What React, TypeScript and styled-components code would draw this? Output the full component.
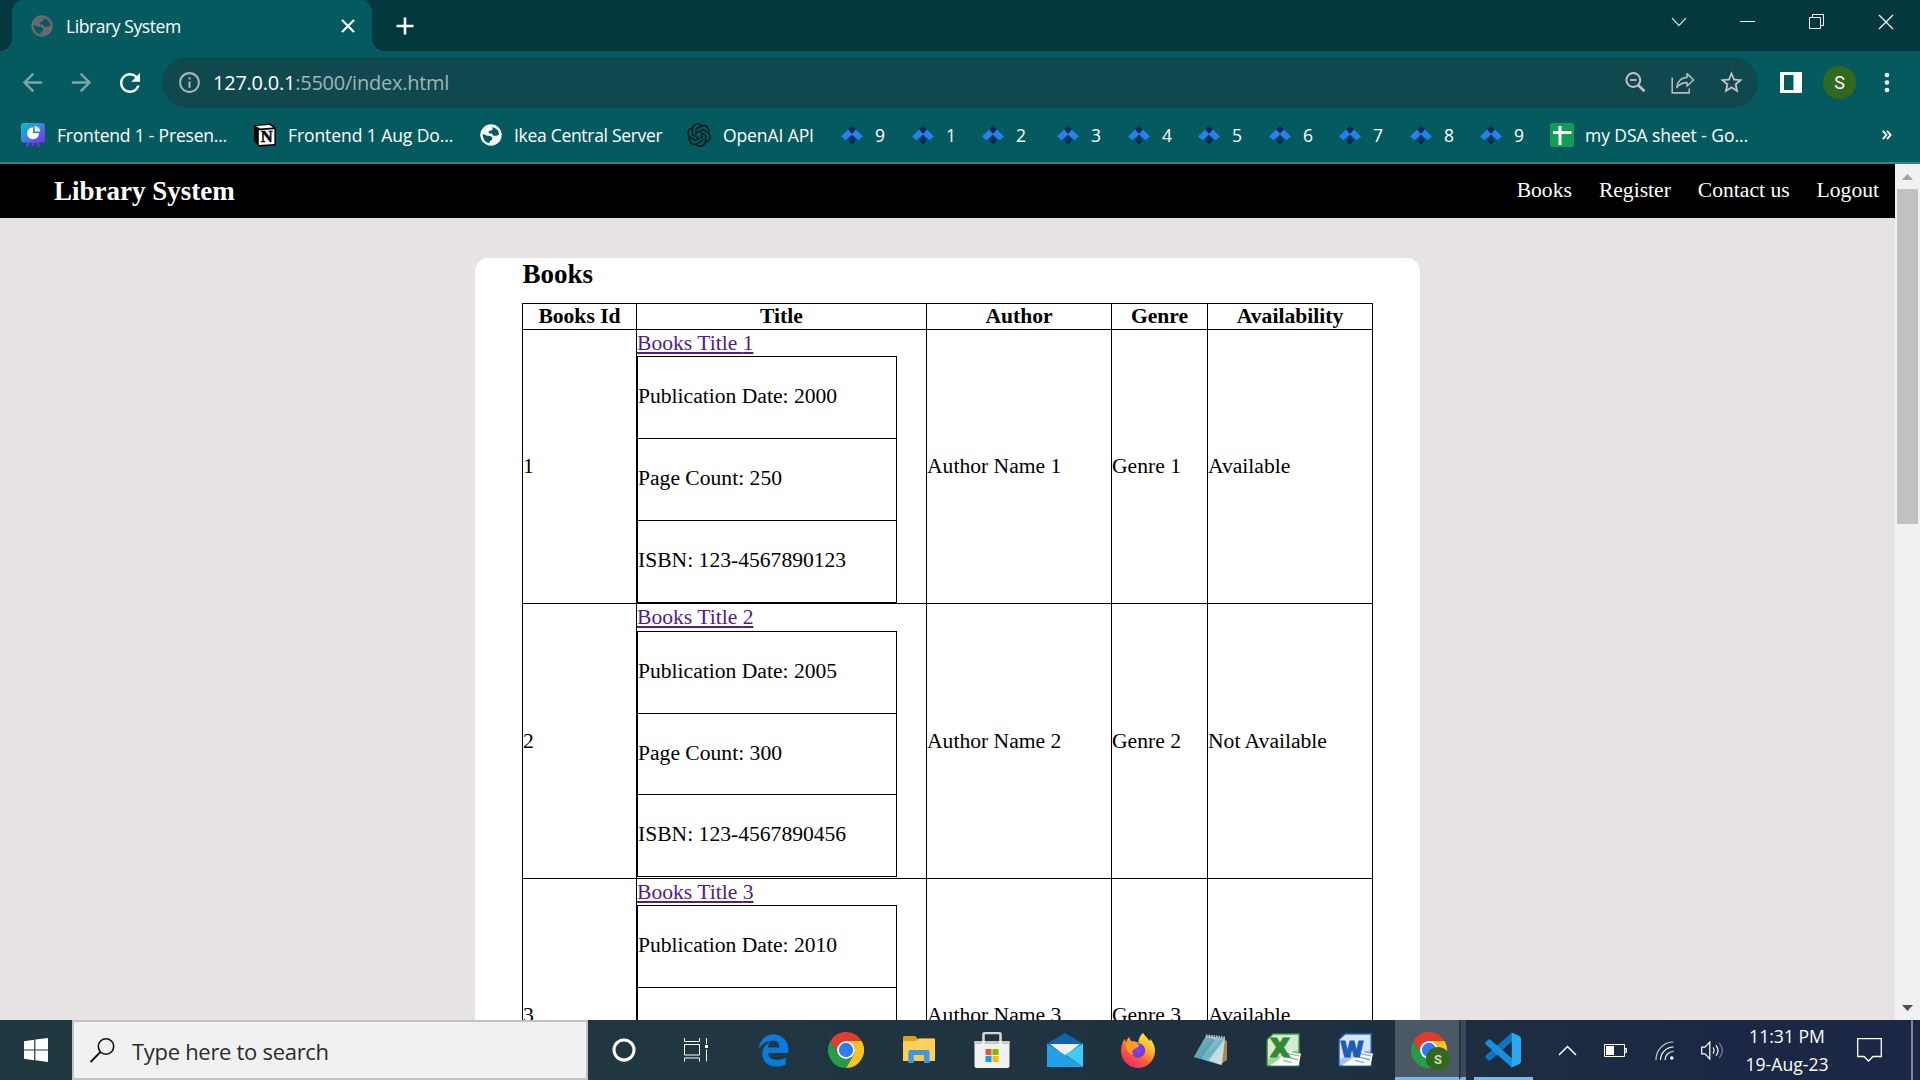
import React from "react";
import styled, { createGlobalStyle } from "styled-components";
import {
  MdArrowBack,
  MdArrowForward,
  MdRefresh,
  MdInfoOutline,
  MdStarOutline,
} from "react-icons/md";
import { SiOpenai } from "react-icons/si";
import { FaEdgeLegacy } from "react-icons/fa";

const ui = `"Open Sans", "Noto Sans", sans-serif`;
const serif = `"Liberation Serif", "Times New Roman", serif`;

const GlobalStyle = createGlobalStyle`
  * { box-sizing: border-box; }
  body { margin: 0; overflow: hidden; background: #e8e3e3; }
  svg { display: block; flex: none; }
`;

const Desktop = styled.div`
  width: 1920px;
  height: 1080px;
  display: flex;
  flex-direction: column;
  overflow: hidden;
`;

/* Fixed-width cell of a bar with centred content. */
const Slot = styled.div<{ $w: number }>`
  flex: none;
  width: ${(p) => p.$w}px;
  height: 100%;
  display: flex;
  align-items: center;
  justify-content: center;
`;
const Spacer = styled.div`
  flex: 1;
`;

/* ---------- Browser chrome ---------- */

const TabStrip = styled.div`
  flex: none;
  height: 51px;
  background: #03393e;
  display: flex;
`;
const TabCurve = styled.div<{ $side: "left" | "right" }>`
  width: 12px;
  height: 51px;
  background: radial-gradient(
    circle at ${(p) => (p.$side === "left" ? "0" : "12px")} 39px,
    transparent 11.5px,
    #055a60 12.2px
  );
  clip-path: inset(39px 0 0 0);
`;
const Tab = styled.div`
  width: 360px;
  height: 51px;
  background: #055a60;
  border-radius: 12px 12px 0 0;
  display: flex;
  align-items: center;
  padding: 0 17px 0 19px;
  color: #fff;
`;
const TabTitle = styled.span`
  flex: 1;
  padding-left: 13px;
  font: 17.5px/24px ${ui};
  letter-spacing: -0.42px;
`;
const WindowButtons = styled.div`
  display: flex;
  height: 43px;
`;

const Toolbar = styled.div`
  flex: none;
  height: 63px;
  padding-top: 6px;
  background: #055a60;
  display: flex;
  align-items: flex-start;
`;
const ToolGroup = styled.div<{ $w: number; $pad?: number }>`
  width: ${(p) => p.$w}px;
  padding-left: ${(p) => p.$pad ?? 0}px;
  height: 51px;
  display: flex;
`;
const AddressBar = styled.div`
  width: 1596px;
  height: 51px;
  border-radius: 26px;
  background: #0f484e;
  display: flex;
  align-items: center;
  padding-left: 15px;
  padding-right: 3px;
`;
const Url = styled.span`
  flex: 1;
  padding-left: 11px;
  font: 20px/28px ${ui};
  letter-spacing: -0.24px;
  color: #9fb6b8;
  b {
    font-weight: 400;
    color: #fff;
  }
`;
const Avatar = styled.div`
  width: 33px;
  height: 33px;
  border-radius: 50%;
  background: #33691e;
  color: #fff;
  font: 18px/33px Roboto, sans-serif;
  text-align: center;
`;

const BookmarksBar = styled.div`
  flex: none;
  height: 50px;
  background: #055a60;
  border-bottom: 2px solid #3b8085;
  display: flex;
  align-items: flex-start;
  padding-left: 21px;
`;
const Bookmark = styled.div<{ $w: number; $gap?: number; $ls?: number }>`
  width: ${(p) => p.$w}px;
  height: 42px;
  display: flex;
  align-items: center;
  gap: ${(p) => p.$gap ?? 12}px;
  color: #fff;
  font: 17.5px/24px ${ui};
  letter-spacing: ${(p) => p.$ls ?? 0}px;
  white-space: nowrap;
`;

/* ---------- Web page ---------- */

const Viewport = styled.div`
  flex: none;
  height: 856px;
  display: flex;
  overflow: hidden;
`;
const Page = styled.div`
  width: 1895px;
  height: 856px;
  overflow: hidden;
  background: #e8e3e3;
  font-family: ${serif};
  font-size: 21.6px;
  color: #000;
`;
const SiteHeader = styled.header`
  height: 54px;
  background: #000;
  color: #fff;
  display: flex;
  justify-content: space-between;
  padding: 0 16px 0 54px;
`;
const Brand = styled.div`
  font-size: 27px;
  font-weight: 700;
  line-height: 54px;
`;
const Nav = styled.nav`
  display: flex;
  gap: 27px;
  line-height: 53px;
`;
const Card = styled.main`
  width: 945px;
  margin: 40px 0 0 475px;
  height: 900px;
  padding: 0 47px;
  border-radius: 13.5px;
  background: #fff;
`;
const Heading = styled.h2`
  margin: 0;
  height: 45px;
  padding-left: 0.5px;
  font-size: 27px;
  line-height: 33px;
`;
const Table = styled.div`
  width: 851px;
  border-right: 1px solid #000;
`;
const HeadRow = styled.div`
  display: grid;
  grid-template-columns: 114px 290px 185px 96px 165px;
  height: 25.8px;
  border-top: 1px solid #000;
`;
const Row = styled(HeadRow)`
  height: 274.6px;
`;
const HeadCell = styled.div`
  border-left: 1px solid #000;
  font-weight: 700;
  text-align: center;
  line-height: 24px;
`;
const Cell = styled.div`
  border-left: 1px solid #000;
  display: flex;
  align-items: center;
  line-height: 25px;
`;
const TitleCell = styled.div`
  border-left: 1px solid #000;
`;
const BookLink = styled.a`
  display: block;
  height: 26.5px;
  line-height: 26.6px;
  color: #551a8b;
  text-decoration: underline;
  text-decoration-thickness: 2px;
  text-underline-offset: 2px;
`;
const Details = styled.div`
  width: 260px;
  border: solid #000;
  border-width: 0 1px 1px;
`;
const Detail = styled.div`
  height: 81.8px;
  border-top: 1px solid #000;
  line-height: 79.4px;
`;

const Scrollbar = styled.div`
  width: 25px;
  background: #f1f1f1;
  display: flex;
  flex-direction: column;
  align-items: center;
  justify-content: space-between;
`;
const ScrollEnd = styled.div`
  height: 25px;
  display: flex;
  align-items: center;
  padding-top: 1px;
`;
const Thumb = styled.div`
  width: 21px;
  height: 335px;
  background: #c1c1c1;
`;

/* ---------- Taskbar ---------- */

const Taskbar = styled.div`
  flex: none;
  height: 60px;
  display: flex;
  background: linear-gradient(90deg, #203840 0, #203640 40%, #1e2e40 76%, #1b2744 90%, #1b2744 100%);
`;
const SearchBox = styled.div`
  width: 516px;
  height: 60px;
  background: #f1f1f1;
  border: 2px solid #c2c2c2;
  display: flex;
  align-items: center;
  padding-left: 16px;
  gap: 17px;
  font: 22px/30px ${ui};
  letter-spacing: -0.3px;
  color: #2b2b2b;
  span {
    padding-top: 1px;
  }
`;
const ActiveApp = styled.div`
  width: 64px;
  height: 60px;
  background: #4b5966;
  border-bottom: 3px solid #76b9ed;
  display: flex;
  justify-content: center;
  padding: 12px 0 0 7px;
`;
const ActiveEdge = styled.div`
  width: 7px;
  height: 60px;
  background: #3e4a5a;
  border-left: 2px solid #28343f;
  border-bottom: 3px solid #76b9ed;
`;
const RunningApp = styled.div`
  width: 59px;
  height: 60px;
  margin-left: 8px;
  border-bottom: 3px solid #76b9ed;
  display: flex;
  justify-content: center;
  padding: 12px 1px 0 0;
`;
const Clock = styled.div`
  width: 100px;
  text-align: center;
  color: #fff;
  font: 17.6px/28px ${ui};
  padding-top: 2px;
`;
const ShowDesktop = styled.div`
  width: 9px;
  border-left: 2px solid #808994;
`;

/* ---------- Drawings ---------- */

const Globe = ({ color }: { color: string }) => (
  <svg width="22" height="22" viewBox="0 0 22 22">
    <circle cx="11" cy="11" r="10.700" fill={color} />
    <path
      d="M12.500 3.200C16.500 3.800 19 7 19.200 10.500l-2.400 1.300h-3.600l-1.200-2.200H9.200L8.400 7.800l2-1.200 2.100-.6z"
      fill="#055a60"
    />
    <path
      d="M2.800 9.800l3.600 1.800 3.800.4 2.200 1.600-.4 2.200-2 1.200-.6 2.200C5.200 18.600 2.400 14.800 2.800 9.800z"
      fill="#055a60"
    />
  </svg>
);

const Presentation = () => (
  <svg width="24" height="24" viewBox="0 0 24 24">
    <defs>
      <linearGradient id="pres" x1="0" y1="0" x2="1" y2="1">
        <stop offset="0" stopColor="#00c4cc" />
        <stop offset="0.5" stopColor="#3f7fe0" />
        <stop offset="1" stopColor="#7d2ae8" />
      </linearGradient>
    </defs>
    <path d="M8 18l-2 6M16 18l2 6M12 18v5" stroke="#7d2ae8" strokeWidth="2.6" />
    <path d="M3 0h18a3 3 0 0 1 3 3v13.500a3 3 0 0 1-3 3H3a3 3 0 0 1-3-3V3a3 3 0 0 1 3-3z" fill="url(#pres)" />
    <path d="M12 4.200a6 6 0 1 0 6 6h-6z" fill="#fff" />
    <path d="M13.600 2.800v5.600h5.600a5.600 5.600 0 0 0-5.600-5.600z" fill="#dff3ff" />
  </svg>
);

const Notion = () => (
  <svg width="24" height="24" viewBox="0 0 24 24">
    <path d="M1 2.200 17 .600l6 4.200v17.700L6 23.800 1 17.500z" fill="#000" />
    <path d="M3 2.900 16.400 1.900l3.800 2.700L7 5.500z" fill="#fff" />
    <path d="M5.800 7.200 21.400 6.200v14.800L5.800 22z" fill="#fff" />
    <text x="13.700" y="19.400" textAnchor="middle" fontFamily={serif} fontWeight="700" fontSize="16.500" fill="#000" stroke="#000" strokeWidth="0.500">N</text>
  </svg>
);

const Diamonds = () => (
  <svg width="22" height="20" viewBox="0 0 22 20">
    <path d="M11 0l4 4.800-4 4.800-4-4.800zM11 10.600l4 4.600L11 20l-4-4.800z" fill="#06285c" />
    <path d="M7.200 4.600l4 4.700L4.400 15.200 0 11.400zM14.800 4.600l-4 4.700 6.800 5.900 4.400-3.800z" fill="#2680f2" />
  </svg>
);

const Sheet = () => (
  <svg width="24" height="24" viewBox="0 0 24 24">
    <rect width="24" height="24" rx="2" fill="#0f9d58" />
    <path d="M10 3v19M3 9.500h18.500" stroke="#fff" strokeWidth="3" />
  </svg>
);

const ZoomOut = () => (
  <svg width="21" height="21" viewBox="0 0 21 21" fill="none" stroke="#bfc3c4">
    <circle cx="8.300" cy="8" r="6.900" strokeWidth="2" />
    <path d="M5 8h6.600" strokeWidth="1.800" />
    <path d="M13 13l6.500 6.300" strokeWidth="2.600" />
  </svg>
);
const Share = () => (
  <svg width="24" height="22" viewBox="0 0 24 22" fill="none" stroke="#b4babb" strokeWidth="1.600">
    <path d="M1.200 5.500v15.400h17v-4.400" />
    <path d="M5.800 15.500C6.600 9 10.600 5.600 16 5.400V1.600L22.600 8 16 14.200v-3.600c-4.600 0-7.600 1.400-10.200 4.900z" strokeLinejoin="round" />
  </svg>
);
const SidePanel = () => (
  <svg width="22" height="21" viewBox="0 0 22 21">
    <path d="M0 0h22v21H0zM4 3v15h9.500V3z" fill="#fff" fillRule="evenodd" />
  </svg>
);
const Dots = () => (
  <svg width="6" height="21" viewBox="0 0 6 21" fill="#fff">
    <circle cx="3" cy="3" r="2.300" />
    <circle cx="3" cy="10.500" r="2.300" />
    <circle cx="3" cy="18" r="2.300" />
  </svg>
);
const Cross = ({ size, stroke }: { size: number; stroke: number }) => (
  <svg width={size} height={size} viewBox={`0 0 ${size} ${size}`}>
    <path d={`M1 1L${size - 1} ${size - 1}M${size - 1} 1L1 ${size - 1}`} stroke="#fff" strokeWidth={stroke} />
  </svg>
);
const Plus = () => (
  <svg width="18" height="18" viewBox="0 0 18 18">
    <path d="M9 0.500v17M0.500 9h17" stroke="#fff" strokeWidth="2.600" />
  </svg>
);
const TabsChevron = () => (
  <svg width="16" height="10" viewBox="0 0 16 10" fill="none">
    <path d="M1 1l7 7.500L15 1" stroke="#c9d3d4" strokeWidth="1.200" />
  </svg>
);
const Minimise = () => (
  <svg width="15" height="3" viewBox="0 0 15 3">
    <path d="M0 1.500h15" stroke="#fff" />
  </svg>
);
const Restore = () => (
  <svg width="15" height="15" viewBox="0 0 15 15" fill="none" stroke="#fff">
    <path d="M.5 3.500h11v11H.5z" />
    <path d="M3.500 3.500v-3h11v11h-3" />
  </svg>
);
const Overflow = () => (
  <svg width="10" height="10" viewBox="0 0 10 10" fill="none" stroke="#fff" strokeWidth="1.900">
    <path d="M.8 .800L4.400 5 .8 9.200M5 .800L8.600 5 5 9.200" />
  </svg>
);

const Windows = () => (
  <svg width="24" height="24" viewBox="0 0 24 24" fill="#fff">
    <path d="M0 3.200L10.200 1.800v9.600H0zM11.400 1.600L24 0v11.400H11.400zM0 12.400h10.200v9.800L0 20.800zM11.400 12.400H24V24l-12.600-1.700z" />
  </svg>
);
const Magnifier = () => (
  <svg width="25" height="25" viewBox="0 0 25 25" fill="none" stroke="#111">
    <circle cx="16" cy="8.500" r="7.700" strokeWidth="1.600" />
    <path d="M10.400 14L.6 24" strokeWidth="1.800" />
  </svg>
);
const Cortana = () => (
  <svg width="24" height="24" viewBox="0 0 24 24">
    <circle cx="12" cy="12" r="10" fill="none" stroke="#fff" strokeWidth="3" />
  </svg>
);
const TaskView = () => (
  <svg width="24" height="24" viewBox="0 0 24 24" fill="none" stroke="#fff">
    <path d="M.5 0v3.500h15V0M.5 6.500h15v10.500H.5zM.5 23.500V20h15v3.500M22.500 0v6M22.500 11.500V23.500" />
    <path d="M21 7h3v3h-3z" fill="#fff" stroke="none" />
  </svg>
);
const Chrome = ({ badge }: { badge?: boolean }) => (
  <svg width={badge ? 40 : 36} height={badge ? 40 : 36} viewBox={badge ? "0 0 40 40" : "0 0 36 36"}>
    <path d="M33.600 9A18 18 0 0 0 2.400 9L10.200 22.500A9 9 0 0 1 18 9z" fill="#e33b2e" />
    <path d="M33.600 9A18 18 0 0 1 18 36L25.800 22.500A9 9 0 0 0 18 9z" fill="#fcc31e" />
    <path d="M2.400 9A18 18 0 0 0 18 36L25.800 22.500A9 9 0 0 1 10.200 22.500z" fill="#289b48" />
    <circle cx="18" cy="18" r="9" fill="#fff" />
    <circle cx="18" cy="18" r="7.200" fill="#2e7cf0" />
    {badge && (
      <g>
        <circle cx="27" cy="27" r="12" fill="#33691e" />
        <text x="27" y="31.500" textAnchor="middle" fontFamily="Roboto, sans-serif" fontWeight="700" fontSize="13" fill="#c7d8c0">S</text>
      </g>
    )}
  </svg>
);
const Folder = () => (
  <svg width="32" height="28" viewBox="0 0 32 28">
    <path d="M0 1.500Q0 0 1.500 0h10.800l2.400 2.800H32V24H0z" fill="#e09f10" />
    <path d="M0 5h13l3-2.600h15q1 0 1 1V25H0z" fill="#fbd05b" />
    <path d="M5.300 27V15.600q0-1.600 1.600-1.600h18q1.600 0 1.600 1.600V27h-5.400v-8h-10.400v8z" fill="#3f97dd" />
    <path d="M11 19h10v6H11z" fill="#f8c94d" />
  </svg>
);
const Store = () => (
  <svg width="36" height="36" viewBox="0 0 36 36">
    <path d="M9.500 11V2.500Q9.500 1 11 1h14q1.500 0 1.500 1.500V11" fill="none" stroke="#d4d4d4" strokeWidth="2.600" />
    <path d="M.5 9h35v25a2 2 0 0 1-2 2h-31a2 2 0 0 1-2-2z" fill="#f3f1f0" />
    <path d="M.5 9h35v3H.5z" fill="#c9c9c9" />
    <path d="M9.500 9v3M26.500 9v3" stroke="#f3f1f0" strokeWidth="2.600" />
    <path d="M11.500 17h6v6h-6z" fill="#f25022" />
    <path d="M18.500 17h6v6h-6z" fill="#7fba00" />
    <path d="M11.500 24h6v6h-6z" fill="#00a4ef" />
    <path d="M18.500 24h6v6h-6z" fill="#ffb900" />
  </svg>
);
const Mail = () => (
  <svg width="36" height="34" viewBox="0 0 36 34">
    <path d="M0 10.500L18 0l18 10.500V15H0z" fill="#0f62b0" />
    <path d="M3 11h30L18 23z" fill="#f0efef" />
    <path d="M0 10.500L18 22 36 34H0z" fill="#22a0ea" />
    <path d="M36 10.500L18 21.500 36 34z" fill="#3ecbf7" />
  </svg>
);
const Firefox = () => (
  <svg width="34" height="35" viewBox="0 0 34 35">
    <defs>
      <linearGradient id="fox" x1="0.85" y1="0" x2="0.2" y2="1">
        <stop offset="0" stopColor="#fff44f" />
        <stop offset="0.35" stopColor="#ffb52e" />
        <stop offset="0.65" stopColor="#ff5a36" />
        <stop offset="1" stopColor="#e91e80" />
      </linearGradient>
      <radialGradient id="orb">
        <stop offset="0" stopColor="#9a3df5" />
        <stop offset="1" stopColor="#5b3fd6" />
      </radialGradient>
    </defs>
    <path d="M22 0c1.500 3 5 5 6.600 8.200l.7-2.200C32.500 9.500 34 13.500 34 18a17 17 0 0 1-34 0C0 13 1.500 9 3.600 5.800L5 9.400C5.600 7 6.800 5.300 8.400 4c.2 2 .8 3 2 4.200 2.600-.2 5 .2 7 1.600C17.400 6 19 2.500 22 0z" fill="url(#fox)" />
    <circle cx="17" cy="17.500" r="7.200" fill="url(#orb)" />
    <path d="M5 10c4-2 8-1.500 11 .6l2.500 1.800c-1.500 2.400-5 2.600-6.500 4.600-1 1.500-.6 3.600.8 5C7 21 3.800 15.500 5 10z" fill="#ff9a25" />
  </svg>
);
const Notepad = () => (
  <svg width="34" height="34" viewBox="0 0 34 34">
    <defs>
      <linearGradient id="pad" x1="0" y1="0" x2="1" y2="1">
        <stop offset="0" stopColor="#d7f0f5" />
        <stop offset="0.55" stopColor="#6bb2c1" />
        <stop offset="1" stopColor="#b9dce4" />
      </linearGradient>
    </defs>
    <path d="M29 6l4 2v19l-6 4z" fill="#a98754" />
    <path d="M12 3l19 2-4 27L0 24z" fill="url(#pad)" />
    <path d="M12 3L21 7 7 26 0 24z" fill="#438fa3" opacity="0.6" />
    <path d="M31 5l-3 27-13-5z" fill="#e0e8ea" opacity="0.7" />
    <path d="M12 3l19 2.200" stroke="#b9bec0" strokeWidth="3.600" strokeDasharray="1.500 1" />
  </svg>
);
const Office = ({ letter, main, light }: { letter: string; main: string; light: string }) => (
  <svg width="36" height="34" viewBox="0 0 36 34">
    <path d="M7 .800h26.200v32H1V6.500z" fill={light} stroke={main} strokeWidth="1.200" />
    <path d="M7.500 2h24.500v15L2 26V7z" fill="#fff" opacity="0.55" />
    <path d="M20 17l15 3.500-2.500 12H4l9-6z" fill="#fff" />
    <path d="M22 20.500l11 2.500M20 24l12 2.600M17 27.500l9 2M26 18.800l7 1.600" stroke={main} strokeWidth="1.100" opacity="0.65" />
    <text x="14" y="24" textAnchor="middle" fontFamily='"Open Sans", sans-serif' fontWeight="800" fontSize={letter === "W" ? 22 : 27} fill={main} stroke={main} strokeWidth="1.200">{letter}</text>
  </svg>
);
const VSCode = () => (
  <svg width="36" height="36" viewBox="0 0 36 36">
    <path d="M27 9.500v-9L1 23.300q-1.400 1.500 0 3l2.200 2q1 .8 2.300 0z" fill="#0d74bd" />
    <path d="M27 26.500v9L1 12.700q-1.400-1.500 0-3l2.200-2q1-.8 2.300 0z" fill="#1590dd" />
    <path d="M26 .200L34.500 4Q36 4.800 36 6.400v23.200q0 1.600-1.500 2.400L26 35.800q.8-.6.8-2V2.200q0-1.400-.8-2z" fill="#27a9f2" />
  </svg>
);
const TrayChevron = () => (
  <svg width="19" height="11" viewBox="0 0 19 11" fill="none">
    <path d="M1 10l8.500-8.500L18 10" stroke="#fff" strokeWidth="1.500" />
  </svg>
);
const Battery = () => (
  <svg width="23" height="13" viewBox="0 0 23 13">
    <path d="M.5.500h20v12H.5zM21 4.500h1.500v4H21z" fill="none" stroke="#fff" />
    <path d="M2 2h8v9H2z" fill="#fff" />
  </svg>
);
const Wifi = () => (
  <svg width="19" height="19" viewBox="0 0 19 19" fill="none" stroke="#fff" strokeWidth="1.200">
    <path d="M1 19A17.500 17.500 0 0 1 18.500 1" opacity="0.75" />
    <path d="M5.500 19A13 13 0 0 1 18.500 6" />
    <path d="M10 19A8.500 8.500 0 0 1 18.500 10.500" />
    <circle cx="16.800" cy="17" r="1.700" fill="#fff" stroke="none" />
  </svg>
);
const Speaker = () => (
  <svg width="23" height="19" viewBox="0 0 23 19" fill="none" stroke="#fff" strokeWidth="1.200">
    <path d="M.7 6.200h3.300L8.800 1v17L4 12.800H.7z" />
    <path d="M12 6.500q2.200 3 0 6M15 4.300q4 5.200 0 10.400" />
    <path d="M18.300 2q6 7.500 0 15" opacity="0.45" />
  </svg>
);
const Notification = () => (
  <svg width="25" height="24" viewBox="0 0 25 24" fill="none">
    <path d="M.7.700h23.600v17.800h-8.300L11.500 23 7 18.500H.7z" stroke="#fff" strokeWidth="1.300" />
  </svg>
);
const Arrow = ({ down }: { down?: boolean }) => (
  <svg width="11" height="6" viewBox="0 0 11 6">
    {down ? <path d="M0 0h11L5.500 6z" fill="#505050" /> : <path d="M0 6h11L5.500 0z" fill="#a3a3a3" />}
  </svg>
);

/* ---------- Data ---------- */

const books = [
  { id: 1, year: 2000, pages: 250, isbn: "123-4567890123", status: "Available" },
  { id: 2, year: 2005, pages: 300, isbn: "123-4567890456", status: "Not Available" },
  { id: 3, year: 2010, pages: 350, isbn: "123-4567890789", status: "Available" },
];

const numbered: [string, number][] = [
  ["9", 71], ["1", 70], ["2", 75], ["3", 71], ["4", 70], ["5", 71], ["6", 70], ["7", 71], ["8", 70], ["9", 70],
];

export default function App() {
  return (
    <Desktop>
      <GlobalStyle />
      <TabStrip>
        <TabCurve $side="left" />
        <Tab>
          <Globe color="#6a6a6c" />
          <TabTitle>Library System</TabTitle>
          <Cross size={14} stroke={2.2} />
        </Tab>
        <TabCurve $side="right" />
        <Slot $w={42}>
          <Plus />
        </Slot>
        <Spacer />
        <WindowButtons>
          <Slot $w={68}><TabsChevron /></Slot>
          <Slot $w={69}><Minimise /></Slot>
          <Slot $w={69}><Restore /></Slot>
          <Slot $w={69}><Cross size={16} stroke={1.2} /></Slot>
        </WindowButtons>
      </TabStrip>

      <Toolbar>
        <ToolGroup $w={162} $pad={8}>
          <Slot $w={49}><MdArrowBack size={29} color="#7ba5a8" /></Slot>
          <Slot $w={48}><MdArrowForward size={29} color="#7ba5a8" /></Slot>
          <Slot $w={49}><MdRefresh size={30} color="#fff" /></Slot>
        </ToolGroup>
        <AddressBar>
          <MdInfoOutline size={25} color="#a9b4b6" />
          <Url><b>127.0.0.1</b>:5500/index.html</Url>
          <Slot $w={48}><ZoomOut /></Slot>
          <Slot $w={48}><Share /></Slot>
          <Slot $w={48}><MdStarOutline size={27} color="#bfc3c4" /></Slot>
        </AddressBar>
        <ToolGroup $w={162} $pad={8}>
          <Slot $w={49}><SidePanel /></Slot>
          <Slot $w={49}><Avatar>S</Avatar></Slot>
          <Slot $w={46}><Dots /></Slot>
        </ToolGroup>
      </Toolbar>

      <BookmarksBar>
        <Bookmark $w={232} $ls={-0.2}><Presentation />Frontend 1 - Presen...</Bookmark>
        <Bookmark $w={227} $gap={11} $ls={-0.08}><Notion />Frontend 1 Aug Do...</Bookmark>
        <Bookmark $w={207} $ls={-0.3}><Globe color="#fff" />Ikea Central Server</Bookmark>
        <Bookmark $w={154} $ls={-0.1}><SiOpenai size={24} color="#04191c" />OpenAI API</Bookmark>
        {numbered.map(([label, w], i) => (
          <Bookmark key={i} $w={w}><Diamonds />{label}</Bookmark>
        ))}
        <Bookmark $w={332} $gap={11} $ls={-0.05}><Sheet />my DSA sheet - Go...</Bookmark>
        <Bookmark $w={20}><Overflow /></Bookmark>
      </BookmarksBar>

      <Viewport>
        <Page>
          <SiteHeader>
            <Brand>Library System</Brand>
            <Nav>
              {["Books", "Register", "Contact us", "Logout"].map((item) => (
                <span key={item}>{item}</span>
              ))}
            </Nav>
          </SiteHeader>
          <Card>
            <Heading>Books</Heading>
            <Table>
              <HeadRow>
                {["Books Id", "Title", "Author", "Genre", "Availability"].map((h) => (
                  <HeadCell key={h}>{h}</HeadCell>
                ))}
              </HeadRow>
              {books.map((b) => (
                <Row key={b.id}>
                  <Cell>{b.id}</Cell>
                  <TitleCell>
                    <BookLink>Books Title {b.id}</BookLink>
                    <Details>
                      <Detail>Publication Date: {b.year}</Detail>
                      <Detail>Page Count: {b.pages}</Detail>
                      <Detail>ISBN: {b.isbn}</Detail>
                    </Details>
                  </TitleCell>
                  <Cell>Author Name {b.id}</Cell>
                  <Cell>Genre {b.id}</Cell>
                  <Cell>{b.status}</Cell>
                </Row>
              ))}
            </Table>
          </Card>
        </Page>
        <Scrollbar>
          <div>
            <ScrollEnd><Slot $w={21}><Arrow /></Slot></ScrollEnd>
            <Thumb />
          </div>
          <ScrollEnd><Slot $w={25}><Arrow down /></Slot></ScrollEnd>
        </Scrollbar>
      </Viewport>

      <Taskbar>
        <Slot $w={72}><Windows /></Slot>
        <SearchBox><Magnifier /><span>Type here to search</span></SearchBox>
        <Slot $w={72}><Cortana /></Slot>
        <Slot $w={72}><TaskView /></Slot>
        <Slot $w={82}><FaEdgeLegacy size={33} color="#0a7bdc" /></Slot>
        <Slot $w={64}><Chrome /></Slot>
        <Slot $w={82}><Folder /></Slot>
        <Slot $w={64}><Store /></Slot>
        <Slot $w={82}><Mail /></Slot>
        <Slot $w={64}><Firefox /></Slot>
        <Slot $w={82}><Notepad /></Slot>
        <Slot $w={64}><Office letter="X" main="#2f8a34" light="#9fd49a" /></Slot>
        <Slot $w={79}><Office letter="W" main="#1d5cb8" light="#a9c6ee" /></Slot>
        <ActiveApp><Chrome badge /></ActiveApp>
        <ActiveEdge />
        <RunningApp><VSCode /></RunningApp>
        <Slot $w={68}><TrayChevron /></Slot>
        <Slot $w={29}><Battery /></Slot>
        <Slot $w={69}><Wifi /></Slot>
        <Slot $w={26}><Speaker /></Slot>
        <Slot $w={12} />
        <Clock>
          <div>11:31 PM</div>
          <div>19-Aug-23</div>
        </Clock>
        <Slot $w={65}><Notification /></Slot>
        <Spacer />
        <ShowDesktop />
      </Taskbar>
    </Desktop>
  );
}
